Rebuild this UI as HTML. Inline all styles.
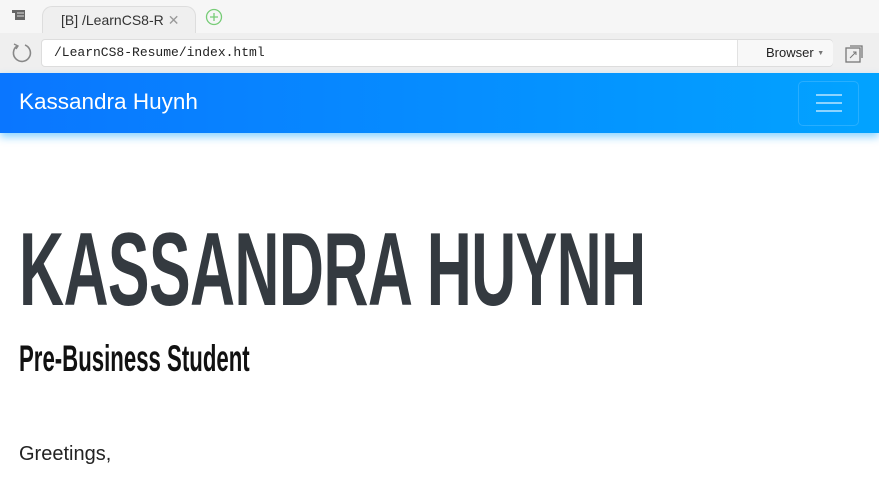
<!DOCTYPE html>
<html><head><style>
body{margin:0;width:879px;height:499px;overflow:hidden;background:#fff;font-family:"Liberation Sans",sans-serif;position:relative}
.tabbar{position:absolute;top:0;left:0;width:879px;height:33px;background:#f6f6f6;border-bottom:1px solid #ddd}
.tab{position:absolute;left:42px;top:6px;width:152px;height:27px;background:#efefef;border:1px solid #ddd;border-bottom:none;border-radius:10px 10px 0 0}
.tab .t{position:absolute;left:18px;top:5px;font-size:14px;color:#333}
.addr{position:absolute;top:33px;left:0;width:879px;height:40px;background:#efefef;border-bottom:1px solid #ddd}
.url{position:absolute;left:41px;top:6px;width:790px;height:26px;background:#fff;border:1px solid #ddd;border-radius:4px}
.url .u{position:absolute;left:12px;top:5px;font:13px "Liberation Mono",monospace;color:#222}
.br{position:absolute;left:695px;top:0;width:95px;height:26px;border-left:1px solid #e2e2e2;background:#f8f8f8;border-radius:0 4px 4px 0}
.br .b{position:absolute;left:28px;top:5px;font:13px "Liberation Sans",sans-serif;color:#222;white-space:nowrap}
.nav{position:absolute;top:73px;left:0;width:879px;height:60px;background:linear-gradient(90deg,#0a76ff,#02a3ff);box-shadow:0 4px 8px rgba(0,160,255,.45)}
.nav .brand{position:absolute;left:19px;top:16px;color:#fff;font-size:22.5px}
.tog{position:absolute;left:798px;top:8px;width:59px;height:43px;border:1px solid rgba(255,255,255,.15);border-radius:5px}
.tog i{position:absolute;left:17px;width:26px;height:2px;background:rgba(255,255,255,.55)}
h1{position:absolute;left:19px;top:215px;margin:0;font-size:104px;font-weight:bold;color:#343a40;transform:scaleX(.6);transform-origin:left;white-space:nowrap;letter-spacing:-1px;line-height:110px}
h2{position:absolute;left:19px;top:338px;margin:0;font-size:37px;font-weight:bold;color:#111;transform:scaleX(.6);transform-origin:left;white-space:nowrap;line-height:42px}
p{position:absolute;left:19px;top:443px;margin:0;font-size:20px;color:#222}
</style></head><body>
<div class="tabbar">
<svg style="position:absolute;left:12px;top:9px" width="14" height="12"><rect x="3" y="1" width="10" height="10" fill="#666"/><rect x="0" y="1" width="3" height="3" fill="#666"/><line x1="5" y1="4" x2="12" y2="4" stroke="#ddd"/><line x1="5" y1="7" x2="12" y2="7" stroke="#ddd"/></svg>
<div class="tab"><span class="t">[B] /LearnCS8-R<span style="color:#999;margin-left:4px">✕</span></span></div>
<svg style="position:absolute;left:205px;top:8px" width="18" height="18"><circle cx="9" cy="9" r="7.5" fill="none" stroke="#7c7" stroke-width="1.3"/><path d="M9 5v8M5 9h8" stroke="#7c7" stroke-width="1.3"/></svg>
</div>
<div class="addr">
<svg style="position:absolute;left:11px;top:9px" width="22" height="22"><path d="M14 3A8.5 8.5 0 1 1 6 4" fill="none" stroke="#888" stroke-width="1.6"/><path d="M3 2l4 2-2 3" fill="none" stroke="#888" stroke-width="1.4"/></svg>
<div class="url"><span class="u">/LearnCS8-Resume/index.html</span><div class="br"><span class="b">Browser <span style="font-size:7px;color:#777;vertical-align:middle">▼</span></span></div></div>
<svg style="position:absolute;left:845px;top:11px" width="20" height="20"><rect x="1" y="4" width="14" height="14" fill="none" stroke="#777" stroke-width="1.3"/><path d="M5 2h12v12" fill="none" stroke="#777" stroke-width="1.3"/><path d="M5 14l6-6M8 8h3v3" fill="none" stroke="#777"/></svg>
</div>
<div class="nav"><div class="brand">Kassandra Huynh</div><div class="tog"><i style="top:12px"></i><i style="top:20px"></i><i style="top:28px"></i></div></div>
<h1>KASSANDRA HUYNH</h1>
<h2>Pre-Business Student</h2>
<p>Greetings,</p>
</body></html>
